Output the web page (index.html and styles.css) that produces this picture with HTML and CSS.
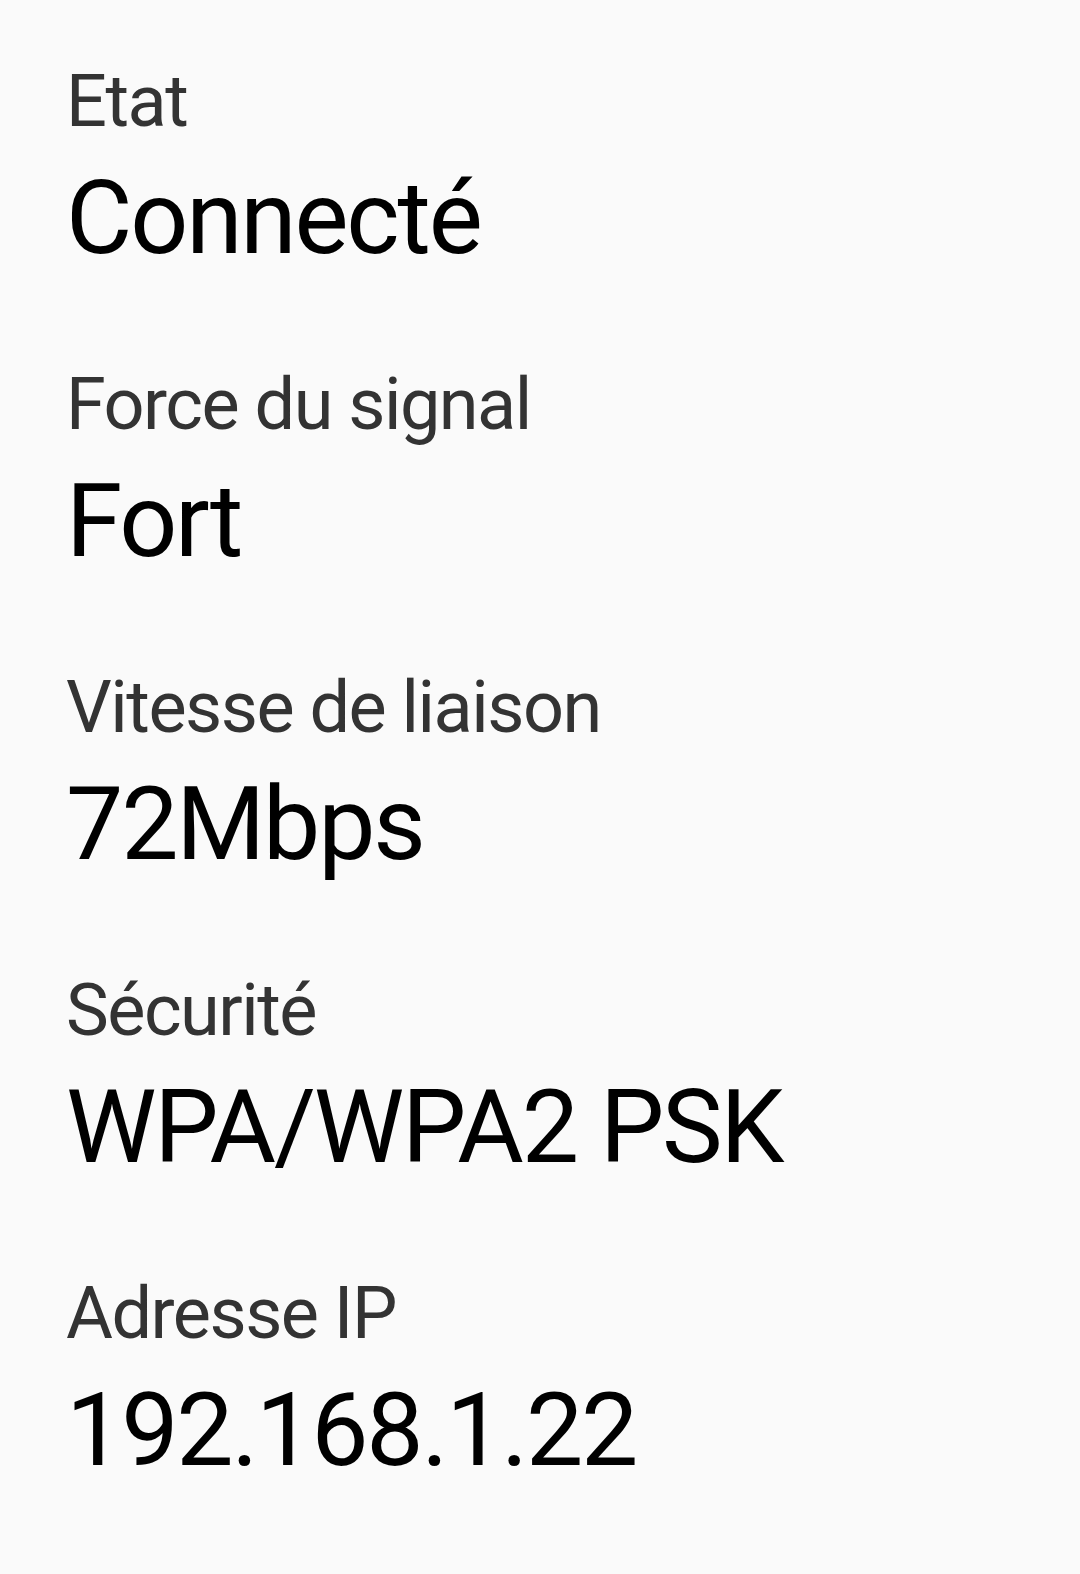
FILE: index.html
```html
<!DOCTYPE html>
<html lang="fr">
<head>
    <meta charset="UTF-8">
    <meta name="viewport" content="width=device-width, initial-scale=1.0">
    <title>Wi-Fi</title>
    <link rel="stylesheet" href="styles.css">
</head>
<body>
    <div class="details">
        <div class="item">
            <div class="label">Etat</div>
            <div class="value">Connecté</div>
        </div>
        <div class="item">
            <div class="label">Force du signal</div>
            <div class="value">Fort</div>
        </div>
        <div class="item">
            <div class="label">Vitesse de liaison</div>
            <div class="value">72Mbps</div>
        </div>
        <div class="item">
            <div class="label">Sécurité</div>
            <div class="value">WPA/WPA2 PSK</div>
        </div>
        <div class="item">
            <div class="label">Adresse IP</div>
            <div class="value">192.168.1.22</div>
        </div>
    </div>
</body>
</html>
```

FILE: styles.css
```css
body {
    font-family: Roboto, "Noto Sans", sans-serif;
    background-color: #fafafa;
    margin: 0;
    padding: 0;
}

.details {
    display: flex;
    flex-direction: column;
    gap: 74px;
    padding: 54px 66px 0;
}

.item {
    display: flex;
    flex-direction: column;
}

.label {
    font-size: 72px;
    line-height: 96px;
    letter-spacing: -1.5px;
    color: #333;
}

.value {
    margin-top: 3px;
    font-size: 102px;
    line-height: 130px;
    letter-spacing: -2.2px;
    color: #000;
}
```
